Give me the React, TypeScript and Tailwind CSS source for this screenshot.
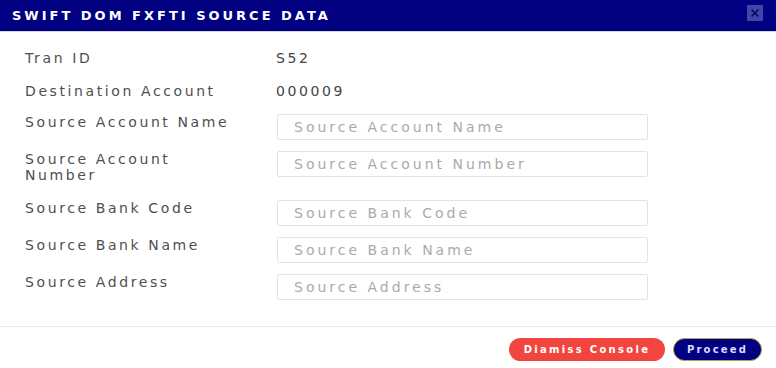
import { X } from 'lucide-react'

const fields = [
  { label: 'Source Account Name', placeholder: 'Source Account Name' },
  { label: 'Source Account Number', placeholder: 'Source Account Number', wrap: true },
  { label: 'Source Bank Code', placeholder: 'Source Bank Code' },
  { label: 'Source Bank Name', placeholder: 'Source Bank Name' },
  { label: 'Source Address', placeholder: 'Source Address' },
]

export default function App() {
  return (
    <div className="w-[776px] h-[368px] bg-white flex flex-col font-['DejaVu_Sans',sans-serif] overflow-hidden">
      {/* Header */}
      <div className="h-[32px] bg-[#000080] border-b border-[#d8d8e0] flex items-center justify-between pl-[12px] pr-[13px]">
        <span className="text-white font-bold text-[13px] tracking-[3px]">SWIFT DOM FXFTI SOURCE DATA</span>
        <span className="self-start mt-[5px] w-[16px] h-[16px] bg-[#4343a8] flex items-center justify-center">
          <X className="w-[12px] h-[12px] text-[#00006a]" strokeWidth={3} />
        </span>
      </div>

      {/* Body */}
      <div className="flex flex-col pl-[25px] pt-[18px] text-[14px] tracking-[2.6px] text-[#4f4f4f]">
        <div className="flex h-[17px] items-center">
          <span className="w-[251px]">Tran ID</span>
          <span className="text-[#444]">S52</span>
        </div>
        <div className="flex h-[17px] items-center mt-[16px]">
          <span className="w-[251px]">Destination Account</span>
          <span className="text-[#444]">000009</span>
        </div>
        <div className="flex flex-col gap-[11px] mt-[14px]">
          {fields.map((f) => (
            <div key={f.label} className="flex items-start">
              <span className={`w-[252px] leading-[16px] ${f.wrap ? 'pr-[60px] pb-[6px]' : ''}`}>{f.label}</span>
              <input
                placeholder={f.placeholder}
                className="w-[371px] h-[26px] border border-[#e3e3e3] rounded-[2px] px-[16px] text-[14px] tracking-[3px] placeholder:text-[#aaa] outline-none"
              />
            </div>
          ))}
        </div>
      </div>

      {/* Footer */}
      <div className="mt-auto border-t border-[#e8e8e8] h-[42px] flex items-start pt-[11px] justify-end gap-[8px] pr-[14px]">
        <button className="h-[23px] w-[156px] rounded-full bg-[#f2453d] text-white text-[10px] font-bold tracking-[2.3px]">
          Diamiss Console
        </button>
        <button className="h-[23px] w-[89px] rounded-full bg-[#000080] border border-[#b5a24a] text-[#dcdcff] text-[10px] font-bold tracking-[2.2px]">
          Proceed
        </button>
      </div>
    </div>
  )
}
